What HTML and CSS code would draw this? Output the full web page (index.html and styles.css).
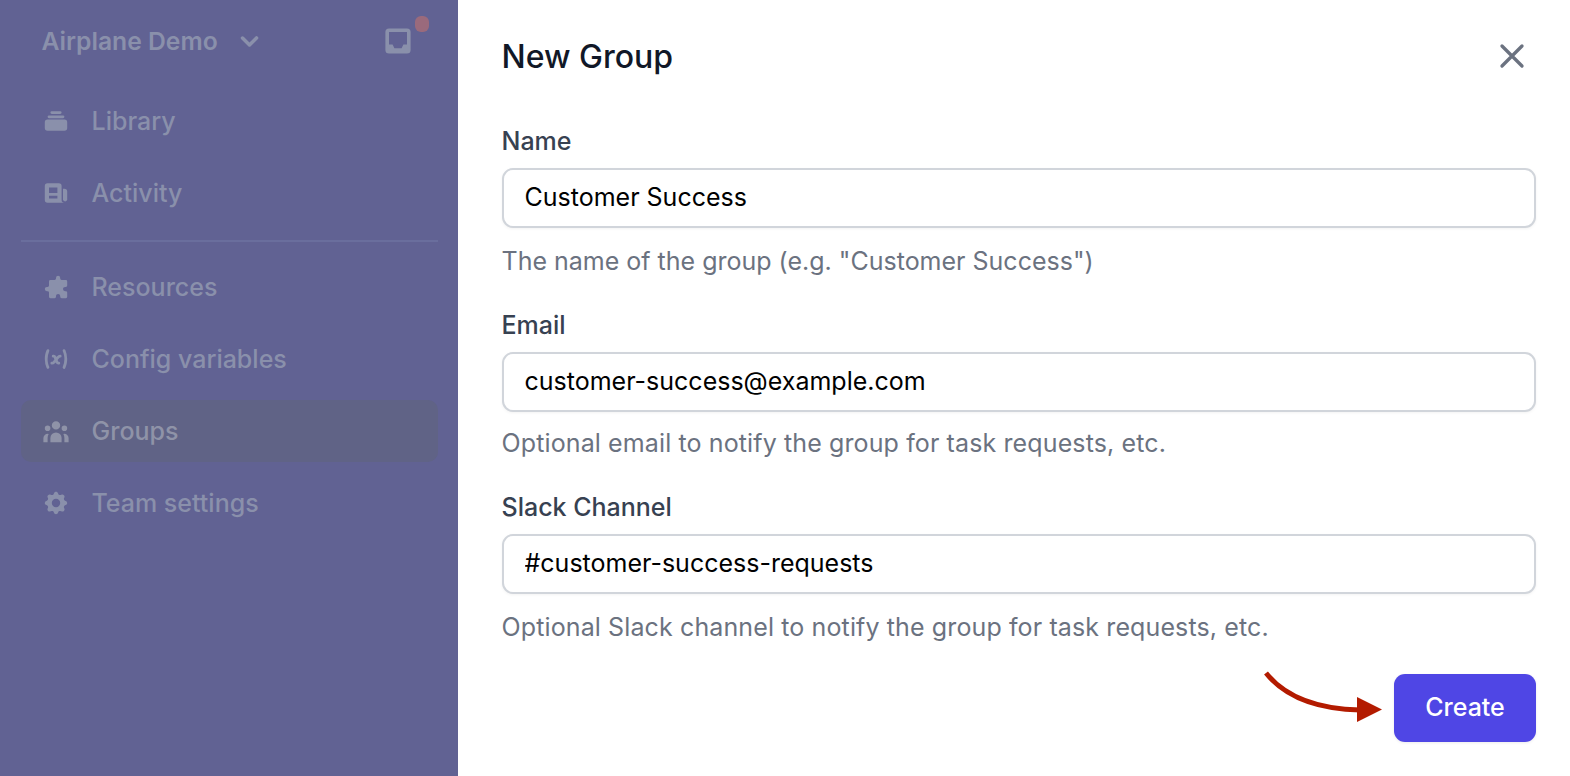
FILE: index.html
```html
<!DOCTYPE html>
<html lang="en">
<head>
<meta charset="utf-8">
<title>New Group</title>
<link rel="stylesheet" href="styles.css">
</head>
<body>
<div class="app">
  <aside class="sidebar">
    <div class="team">
      <span class="team-name">Airplane Demo</span>
      <svg class="chevron" viewBox="0 0 20 20" fill="currentColor"><path fill-rule="evenodd" clip-rule="evenodd" d="M5.293 7.293a1 1 0 011.414 0L10 10.586l3.293-3.293a1 1 0 111.414 1.414l-4 4a1 1 0 01-1.414 0l-4-4a1 1 0 010-1.414z"/></svg>
      <span class="inbox">
        <svg class="inbox-icon" viewBox="0 0 20 20" fill="currentColor"><path fill-rule="evenodd" clip-rule="evenodd" d="M5 3a2 2 0 00-2 2v10a2 2 0 002 2h10a2 2 0 002-2V5a2 2 0 00-2-2H5zm0 2h10v7h-2l-1 2H8l-1-2H5V5z"/></svg>
        <span class="badge"></span>
      </span>
    </div>
    <nav class="nav">
      <a class="nav-item"><svg class="nav-icon" viewBox="0 0 20 20" fill="currentColor"><path d="M7 3a1 1 0 000 2h6a1 1 0 100-2H7zM4 7a1 1 0 011-1h10a1 1 0 110 2H5a1 1 0 01-1-1zM2 11a2 2 0 012-2h12a2 2 0 012 2v4a2 2 0 01-2 2H4a2 2 0 01-2-2v-4z"/></svg>Library</a>
      <a class="nav-item"><svg class="nav-icon" viewBox="0 0 20 20" fill="currentColor"><path fill-rule="evenodd" clip-rule="evenodd" d="M2 5a2 2 0 012-2h8a2 2 0 012 2v10a2 2 0 002 2H4a2 2 0 01-2-2V5zm3 1h6v4H5V6zm6 6H5v2h6v-2z"/><path d="M15 7h1a2 2 0 012 2v5.5a1.5 1.5 0 01-3 0V7z"/></svg>Activity</a>
      <div class="divider"></div>
      <a class="nav-item"><svg class="nav-icon" viewBox="0 0 20 20" fill="currentColor"><path d="M10 3.5a1.5 1.5 0 013 0V4a1 1 0 001 1h3a1 1 0 011 1v3a1 1 0 01-1 1h-.5a1.5 1.5 0 000 3h.5a1 1 0 011 1v3a1 1 0 01-1 1h-3a1 1 0 01-1-1v-.5a1.5 1.5 0 00-3 0v.5a1 1 0 01-1 1H6a1 1 0 01-1-1v-3a1 1 0 00-1-1h-.5a1.5 1.5 0 010-3H4a1 1 0 001-1V6a1 1 0 011-1h3a1 1 0 001-1v-.5z"/></svg>Resources</a>
      <a class="nav-item"><svg class="nav-icon" viewBox="0 0 20 20" fill="currentColor"><path fill-rule="evenodd" clip-rule="evenodd" d="M4.649 3.084A1 1 0 015.163 4.4 13.95 13.95 0 004 10c0 1.993.416 3.886 1.164 5.6a1 1 0 01-1.832.8A15.95 15.95 0 012 10c0-2.274.475-4.44 1.332-6.4a1 1 0 011.317-.516zM12.96 7a3 3 0 00-2.342 1.126l-.328.41-.111-.279A2 2 0 008.323 7H8a1 1 0 000 2h.323l.532 1.33-1.035 1.295a1 1 0 01-.781.375H7a1 1 0 100 2h.039a3 3 0 002.342-1.126l.328-.41.111.279A2 2 0 0011.677 14H12a1 1 0 100-2h-.323l-.532-1.33 1.035-1.295A1 1 0 0112.961 9H13a1 1 0 100-2h-.039zm1.874-2.6a1 1 0 011.833-.8A15.95 15.95 0 0118 10c0 2.274-.475 4.44-1.332 6.4a1 1 0 11-1.832-.8A13.949 13.949 0 0016 10c0-1.993-.416-3.886-1.165-5.6z"/></svg>Config variables</a>
      <a class="nav-item nav-item-active"><svg class="nav-icon" viewBox="0 0 20 20" fill="currentColor"><path d="M13 6a3 3 0 11-6 0 3 3 0 016 0zM18 8a2 2 0 11-4 0 2 2 0 014 0zM14 15a4 4 0 00-8 0v3h8v-3zM6 8a2 2 0 11-4 0 2 2 0 014 0zM16 18v-3a5.972 5.972 0 00-.75-2.906A3.005 3.005 0 0119 15v3h-3zM4.75 12.094A5.973 5.973 0 004 15v3H1v-3a3 3 0 013.75-2.906z"/></svg>Groups</a>
      <a class="nav-item"><svg class="nav-icon" viewBox="0 0 20 20" fill="currentColor"><path fill-rule="evenodd" clip-rule="evenodd" d="M11.49 3.17c-.38-1.56-2.6-1.56-2.98 0a1.532 1.532 0 01-2.286.948c-1.372-.836-2.942.734-2.106 2.106.54.886.061 2.042-.947 2.287-1.561.379-1.561 2.6 0 2.978a1.532 1.532 0 01.947 2.287c-.836 1.372.734 2.942 2.106 2.106a1.532 1.532 0 012.287.947c.379 1.561 2.6 1.561 2.978 0a1.533 1.533 0 012.287-.947c1.372.836 2.942-.734 2.106-2.106a1.533 1.533 0 01.947-2.287c1.561-.379 1.561-2.6 0-2.978a1.532 1.532 0 01-.947-2.287c.836-1.372-.734-2.942-2.106-2.106a1.532 1.532 0 01-2.287-.947zM10 13a3 3 0 100-6 3 3 0 000 6z"/></svg>Team settings</a>
    </nav>
  </aside>
  <main class="panel">
    <header class="panel-head">
      <h1 class="title">New Group</h1>
      <svg class="close" viewBox="0 0 24 24" fill="none" stroke="currentColor" stroke-width="2" stroke-linecap="round" stroke-linejoin="round"><path d="M6 18L18 6M6 6l12 12"/></svg>
    </header>
    <form class="form">
      <div class="field">
        <label class="label">Name</label>
        <input class="input" type="text" value="Customer Success">
        <p class="help">The name of the group (e.g. "Customer Success")</p>
      </div>
      <div class="field">
        <label class="label">Email</label>
        <input class="input" type="text" value="customer-success@example.com">
        <p class="help help-tight help-wide">Optional email to notify the group for task requests, etc.</p>
      </div>
      <div class="field">
        <label class="label">Slack Channel</label>
        <input class="input" type="text" value="#customer-success-requests">
        <p class="help help-wide">Optional Slack channel to notify the group for task requests, etc.</p>
      </div>
      <div class="actions">
        <button class="button" type="button">Create</button>
        <svg class="arrow" viewBox="0 0 130 60" fill="none"><path d="M4 2C24 27 56 38 98 39" stroke="#b31b00" stroke-width="5"/><path d="M95 26L120 38.500 95 51z" fill="#b31b00"/></svg>
      </div>
    </form>
  </main>
</div>
</body>
</html>
```

FILE: styles.css
```css
* { box-sizing: border-box; }
html, body { margin: 0; height: 100%; }
body {
  font-family: Inter, "Liberation Sans", sans-serif;
  background: #ffffff;
  overflow: hidden;
}
.app { display: flex; height: 776px; }

.sidebar {
  width: 458px;
  flex: none;
  background: #616293;
  color: #8a90ab;
  padding: 0 20px 0 21px;
}
.team {
  height: 82px;
  display: flex;
  align-items: center;
  padding-left: 20.500px;
  margin-bottom: 8px;
}
.team-name { font-size: 24.700px; font-weight: 600; line-height: 32px; }
.chevron { width: 35px; height: 35px; margin-left: 14px; }
.inbox { position: relative; display: flex; margin-left: auto; margin-right: 22px; }
.inbox-icon { width: 36px; height: 36px; }
.badge {
  position: absolute;
  left: 35px;
  top: -7px;
  width: 14px;
  height: 16px;
  border-radius: 6px;
  background: #9a6a7c;
}
.nav { display: flex; flex-direction: column; gap: 10px; }
.nav-item {
  height: 62px;
  display: flex;
  align-items: center;
  gap: 21.500px;
  padding-left: 21px;
  border-radius: 10px;
  font-size: 25px;
  font-weight: 550;
}
.nav-item-active { background: #606386; color: #8f93a8; }
.nav-icon { width: 28px; height: 28px; flex: none; }
.divider { height: 2px; background: #6a6e9d; margin: 6px 0 4px; }

.panel { flex: 1; padding: 0 34px 0 43.500px; min-width: 0; }
.panel-head {
  height: 76px;
  padding-top: 36px;
  display: flex;
  align-items: center;
  justify-content: space-between;
}
.title {
  margin: 0;
  padding-top: 2px;
  font-size: 32px;
  line-height: 40px;
  font-weight: 550;
  color: #111827;
}
.close { width: 40px; height: 40px; color: #6b7280; margin: 0 4px 0 0; }
.form { display: flex; flex-direction: column; padding-top: 51px; }
.field { display: flex; flex-direction: column; margin-bottom: 36px; }
.label { font-size: 25px; line-height: 28px; font-weight: 500; color: #374151; margin-bottom: 13px; }
.input {
  height: 60px;
  border: 2px solid #d1d5db;
  border-radius: 11px;
  padding: 0 21px 2px;
  font: 400 25px Inter, "Liberation Sans", sans-serif;
  color: #000000;
  background: #ffffff;
  box-shadow: 0 1px 3px rgba(0, 0, 0, 0.05);
  outline: none;
}
.help { margin: 19px 0 0; font-size: 25px; line-height: 28px; color: #6b7280; }
.help-tight { margin-top: 17px; }
.help-wide { letter-spacing: 0.120px; }
.actions { position: relative; display: flex; justify-content: flex-end; margin-top: -3px; }
.button {
  width: 142px;
  height: 68px;
  border: none;
  border-radius: 11px;
  padding: 0 0 2px;
  background: #4f46e5;
  color: #ffffff;
  font: 500 25px Inter, "Liberation Sans", sans-serif;
  box-shadow: 0 1px 3px rgba(0, 0, 0, 0.08);
}
.arrow { position: absolute; right: 144px; top: -3px; width: 130px; height: 60px; }
```
